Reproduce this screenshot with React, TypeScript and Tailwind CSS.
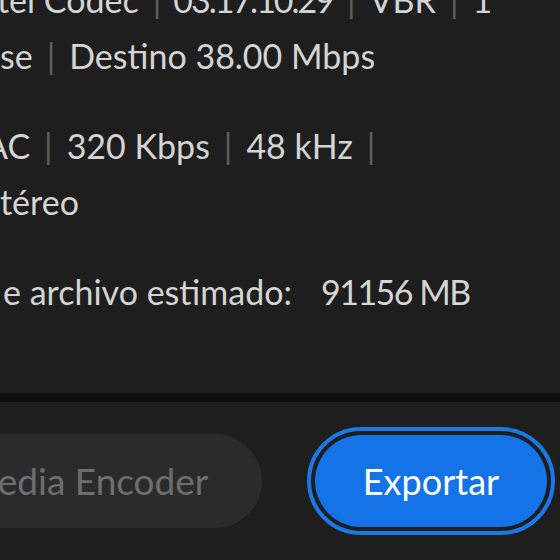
const Sep = () => <span className="mx-[14px] text-[#5f5f5f]">|</span>

const summaryLines = [
  { offset: "-ml-[3px]", parts: ["tel Codec", "03.17.10.29", "VBR", "1"] },
  { offset: "ml-0", parts: ["se", "Destino 38.00 Mbps"] },
]

export default function App() {
  return (
    <div
      className="flex h-[560px] w-[560px] flex-col overflow-hidden bg-[#1e1e1e] text-[#d4d4d4]"
      style={{ fontFamily: "Lato, 'Open Sans', sans-serif" }}
    >
      {/* resumen de la exportación */}
      <div className="flex h-[393px] flex-col whitespace-nowrap text-[34px] leading-[56px]">
        <div className="-mt-[28px] flex flex-col">
          {summaryLines.map((line, i) => (
            <div key={i} className={line.offset}>
              {line.parts.map((p, j) => (
                <span key={j} className={p.startsWith("03") ? "tracking-[-2px]" : ""}>
                  {j > 0 && <Sep />}
                  {p}
                </span>
              ))}
            </div>
          ))}
        </div>
        <div className="mt-[34px] -ml-[15px]">
          AC<Sep />320 Kbps<Sep />48 kHz<Sep />
        </div>
        <div className="ml-0">téreo</div>
        <div className="mt-[34px] ml-[3px]">
          e archivo estimado:
          <span className="ml-[29px] tracking-[-1.5px]">91156 MB</span>
        </div>
      </div>

      <div className="h-[9px] bg-[#0f0f0f]" />

      {/* pie con botones */}
      <div className="flex flex-1 items-center justify-between bg-[#1e1e1e] pr-[5px]">
        <button className="-ml-[120px] flex h-[94px] shrink-0 items-center rounded-full bg-[#2b2b2b] pl-[84px] pr-[54px] text-[37px] text-[#6e6e6e]">
          Media Encoder
        </button>
        <div className="shrink-0 rounded-full border-[4px] border-[#1b78e8] p-[4px]">
          <button className="flex h-[92px] w-[232px] items-center justify-center rounded-full bg-[#1473e6] text-[36px] text-white">
            Exportar
          </button>
        </div>
      </div>
    </div>
  )
}
